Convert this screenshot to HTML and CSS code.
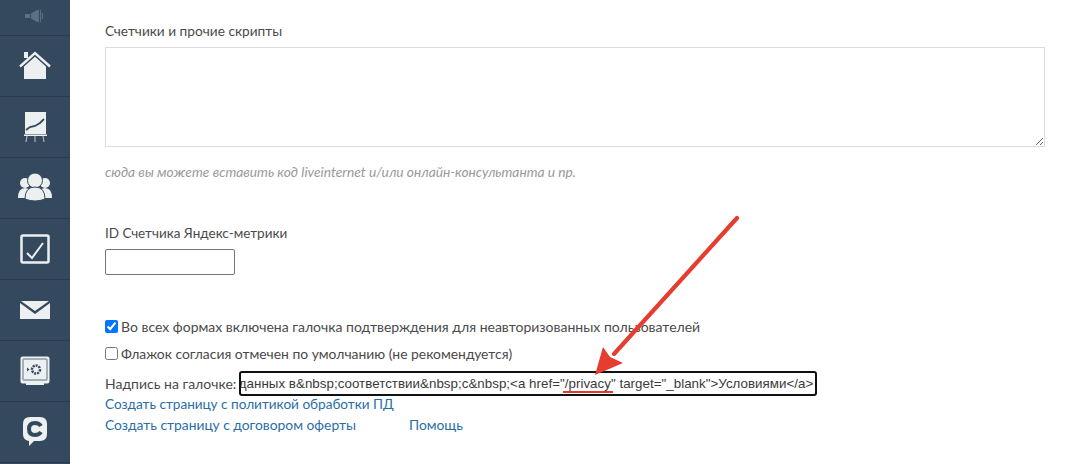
FILE: index.html
```html
<!DOCTYPE html>
<html lang="ru">
<head>
<meta charset="utf-8">
<title>Настройки</title>
<link rel="stylesheet" href="styles.css">
</head>
<body>
<div class="page">
  <nav class="side">
    <div class="item first">
      <svg width="20" height="14" viewBox="0 0 20 14"><path d="M0 5h5v4H0zM6 4.500l6-3.500h2v12h-2L6 9.500zM15 1h1v12h-1z" fill="#5a7085"/><path d="M17 4q1.500 3 0 6" fill="none" stroke="#5a7085" stroke-width="1.200"/></svg>
    </div>
    <div class="item">
      <svg width="32" height="30" viewBox="0 0 32 30"><path d="M5 28V15L16 5l11 10v13z" fill="#ecf0f1"/><path d="M1 16 16 2.500 31 16" fill="none" stroke="#34495e" stroke-width="4.500"/><path d="M1 15.500 16 2l15 13.500" fill="none" stroke="#ecf0f1" stroke-width="2.400"/><path d="M5 1h4v6H5z" fill="#ecf0f1"/></svg>
    </div>
    <div class="item">
      <svg width="24" height="32" viewBox="0 0 24 32"><path d="M2 1h21v22H2z" fill="#ecf0f1"/><path d="M1 23.500h23v1.500H1z" fill="#ecf0f1"/><path d="M4 25l-1 6M12 25v6M20 25l1 6" stroke="#aab4bd" stroke-width="1.200" fill="none"/><path d="M3 19l4-3 5-1 5-3 4-4" fill="none" stroke="#34495e" stroke-width="1.800"/></svg>
    </div>
    <div class="item">
      <svg width="36" height="30" viewBox="0 0 36 30"><circle cx="8" cy="10" r="5" fill="#ecf0f1"/><circle cx="28" cy="10" r="5" fill="#ecf0f1"/><path d="M1 25q0-10 7-10t7 10zM21 25q0-10 7-10t7 10z" fill="#ecf0f1"/><circle cx="18" cy="7.500" r="7.500" fill="#ecf0f1" stroke="#34495e" stroke-width="1"/><path d="M8 26q0-12 10-12t10 12q-10 4-20 0z" fill="#ecf0f1" stroke="#34495e" stroke-width="1"/></svg>
    </div>
    <div class="item">
      <svg width="32" height="32" viewBox="0 0 32 32"><rect x="2.500" y="2.500" width="27" height="27" rx="1.500" fill="none" stroke="#ecf0f1" stroke-width="2.500"/><path d="M8 20l5 5L24 10" fill="none" stroke="#ecf0f1" stroke-width="2"/></svg>
    </div>
    <div class="item">
      <svg width="30" height="20" viewBox="0 0 30 20"><path d="M1 1h28L15 11z" fill="#ecf0f1"/><path d="M0 3v16h30V3L15 14z" fill="#ecf0f1"/></svg>
    </div>
    <div class="item">
      <svg width="30" height="30" viewBox="0 0 30 30"><rect x="0.500" y="0.500" width="29" height="27" rx="2" fill="#ecf0f1"/><rect x="3" y="3" width="24" height="21" rx="1" fill="#ecf0f1" stroke="#8b9aa8" stroke-width="1.500"/><path d="M6 27h18v2H6z" fill="#ecf0f1"/><circle cx="16" cy="13.500" r="4" fill="none" stroke="#34495e" stroke-width="2.500" stroke-dasharray="2 1"/><path d="M7 11.500v4l2.500-2z" fill="#34495e"/></svg>
    </div>
    <div class="item">
      <svg width="26" height="32" viewBox="0 0 26 32"><path d="M8 1h10q7 0 7 7v10q0 7-7 7h-6l-5 5 0-5q-6-1-6-7V8q0-7 7-7z" fill="#ecf0f1"/><path d="M19 10q-2-3-6-3-6 0-6 6t6 6q4 0 6-3" fill="none" stroke="#34495e" stroke-width="4"/></svg>
    </div>
    <div class="item last"></div>
  </nav>
  <main class="content">
    <label class="title">Счетчики и прочие скрипты</label>
    <textarea class="area"></textarea>
    <p class="hint">сюда вы можете вставить код liveinternet и/или онлайн-консультанта и пр.</p>
    <label class="title metric">ID Счетчика Яндекс-метрики</label>
    <input class="short" type="text">
    <label class="check one"><input type="checkbox" checked>Во всех формах включена галочка подтверждения для неавторизованных пользователей</label>
    <label class="check two"><input type="checkbox">Флажок согласия отмечен по умолчанию (не рекомендуется)</label>
    <div class="caption">
      <span>Надпись на галочке:</span>
      <div class="code"><span>данных в&amp;nbsp;соответствии&amp;nbsp;с&amp;nbsp;&lt;a href="<span class="mark">/privacy</span>" target="_blank"&gt;Условиями&lt;/a&gt;</span></div>
    </div>
    <div class="links policy"><a href="#">Создать страницу с политикой обработки ПД</a></div>
    <div class="links row"><a href="#">Создать страницу с договором оферты</a><a class="help" href="#">Помощь</a></div>
  </main>
  <svg class="arrow" width="160" height="190" viewBox="0 0 160 190">
    <path d="M147 18 L24 154" fill="none" stroke="#e53d30" stroke-width="4.200" stroke-linecap="round"/>
    <path d="M5 175 L13 147 L20 157 L33 163 Z" fill="#e53d30"/>
  </svg>
</div>
</body>
</html>
```
FILE: styles.css
```css
* { box-sizing: border-box; }
html, body { margin: 0; padding: 0; height: 100%; background: #fff; overflow: hidden; }
body { font-family: Lato, "Liberation Sans", sans-serif; font-size: 14px; color: #4a4a4a; }
.page { position: relative; display: flex; width: 1068px; height: 464px; overflow: hidden; }
.side { width: 70px; flex: none; background: #34495e; display: flex; flex-direction: column; }
.item { height: 61px; flex: none; display: flex; align-items: center; justify-content: center; border-bottom: 1px solid #2b3c4e; }
.item.first { height: 36px; padding-bottom: 3px; }
.item.last { border: 0; height: 2px; }
.content { flex: 1; padding: 22px 23px 0 35px; display: flex; flex-direction: column; align-items: flex-start; }
.title { display: block; line-height: 17px; font-size: 13.7px; }
.area { display: block; width: 940px; height: 100px; margin-top: 8px; border: 1px solid #ddd; background: #fff; resize: both; padding: 0; }
.hint { margin: 16px 0 0; font-style: italic; font-size: 13.75px; color: #999; line-height: 17px; }
.metric { margin-top: 45px; font-size: 13.5px; }
.short { display: block; width: 130px; height: 26px; margin-top: 7px; border: 1px solid #767676; border-radius: 2px; background: #fff; padding: 0; }
.check { display: flex; align-items: center; line-height: 17px; white-space: pre; }
.check input { margin: 0 3px 0 0; width: 13px; height: 13px; flex: none; }
.check.one { margin-top: 43px; }
.check.two { margin-top: 10px; font-size: 13.9px; }
.caption { display: flex; align-items: center; margin-top: 9px; gap: 3px; white-space: nowrap; }
.code { width: 578px; height: 25px; border: 2px solid #111; border-radius: 3px; display: flex; align-items: center; justify-content: flex-end; overflow: hidden; padding-right: 2px; color: #3a3a3a; font: 13.33px "Liberation Sans", Arial, sans-serif; letter-spacing: 0.03px; }
.mark { position: relative; }
.mark::after { content: ""; position: absolute; left: -2px; right: -2px; bottom: -2px; height: 2px; background: #e0392d; }
.links { line-height: 17px; }
.links.policy { margin-top: 0; font-size: 13.6px; }
.links.row { margin-top: 3px; display: flex; font-size: 13.85px; }
.links a { color: #2a6ea8; text-decoration: none; }
.links .help { margin-left: 53px; }
.arrow { position: absolute; left: 590px; top: 200px; }
```
